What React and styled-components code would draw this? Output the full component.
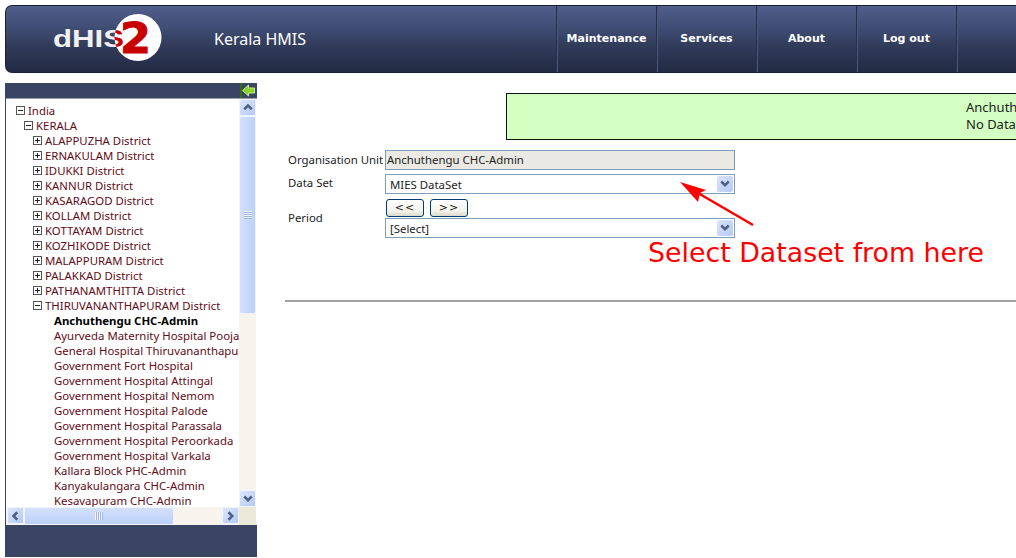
import React from 'react'
import styled, { createGlobalStyle } from 'styled-components'

const GlobalStyle = createGlobalStyle`
  html, body { margin: 0; padding: 0; background: #fff; }
  body { font-family: "Noto Sans", "DejaVu Sans", sans-serif; font-size: 11.4px; }
`

const Page = styled.div`
  position: relative;
  width: 1016px;
  height: 558px;
  overflow: hidden;
  background: #fff;
`

const Header = styled.header`
  display: flex;
  align-items: stretch;
  box-sizing: border-box;
  height: 68px;
  margin: 5px 0 0 5px;
  border: 1px solid #1b2135;
  border-right: none;
  border-radius: 7px 0 0 7px;
  background: linear-gradient(#4f5e8b 0%, #3f4c72 35%, #323d5c 58%, #222a43 100%);
`

const LogoBox = styled.div`
  width: 208px;
  flex: none;
  padding: 7px 0 0 46px;
  box-sizing: border-box;
`

const Title = styled.div`
  flex: 1;
  align-self: center;
  margin-bottom: 1px;
  color: #fff;
  font-size: 16px;
`

const NavItem = styled.div`
  display: flex;
  align-items: center;
  justify-content: center;
  box-sizing: border-box;
  width: ${p => p.$w || 100}px;
  flex: none;
  border-left: 1px solid #28314c;
  box-shadow: inset 1px 0 0 #4a5678;
  color: #fff;
  font-family: "DejaVu Sans", sans-serif;
  font-size: 11px;
  font-weight: 600;
  padding-bottom: 1px;
`

const Content = styled.div`
  display: flex;
  align-items: flex-start;
  margin: 10px 0 0 5px;
`

const Sidebar = styled.aside`
  display: flex;
  flex-direction: column;
  flex: none;
  box-sizing: border-box;
  width: 252px;
  height: 474px;
  background: #3a4563;
`

const SideTop = styled.div`
  display: flex;
  justify-content: flex-end;
  height: 15px;
`

const CollapseBtn = styled.div`
  width: 15px;
  height: 15px;
  border-left: 2px solid #3d6b12;
`

const TreePanel = styled.div`
  display: grid;
  grid-template-columns: 233px 17px;
  grid-template-rows: 408px 18px;
  box-sizing: border-box;
  width: 251px;
  height: 427px;
  margin-left: 1px;
  border-top: 1px solid #9a9fae;
  background: #fff;
`

const Tree = styled.div`
  padding-top: 4px;
  box-sizing: border-box;
  overflow: hidden;
  white-space: nowrap;
`

const Row = styled.div`
  display: flex;
  align-items: center;
  height: 15px;
  padding-left: ${p => p.$indent}px;
  color: ${p => (p.$selected ? '#000' : '#640a14')};
  font-weight: ${p => (p.$selected ? 700 : 400)};
  line-height: 15px;
`

const Toggle = styled.span`
  position: relative;
  flex: none;
  box-sizing: border-box;
  width: 9px;
  height: 9px;
  margin-right: 3px;
  border: 1px solid #555;
  background: #fff;
  &::before {
    content: '';
    position: absolute;
    left: 1px;
    top: 3px;
    width: 5px;
    height: 1px;
    background: #222;
  }
  &::after {
    content: '';
    display: ${p => (p.$open ? 'none' : 'block')};
    position: absolute;
    left: 3px;
    top: 1px;
    width: 1px;
    height: 5px;
    background: #222;
  }
`

const VBar = styled.div`
  display: flex;
  flex-direction: column;
  background: #f6f4ec;
`

const HBar = styled.div`
  display: flex;
  align-items: stretch;
  padding-left: 1px;
  background: #f6f4ec;
`

const ScrollBtn = styled.div`
  display: flex;
  align-items: center;
  justify-content: center;
  flex: none;
  box-sizing: border-box;
  width: ${p => p.$w || 17}px;
  height: ${p => p.$h || 17}px;
  border: 1px solid #eef3fd;
  border-radius: 2px;
  background: linear-gradient(135deg, #dde7fb, #b4c8f2);
`

const Thumb = styled.div`
  display: flex;
  align-items: center;
  justify-content: center;
  flex: none;
  box-sizing: border-box;
  border: 1px solid #eef3fd;
  border-radius: 2px;
  background: linear-gradient(${p => (p.$vertical ? '90deg' : '180deg')}, #d3e0fb, #bcd0f7);
  ${p => (p.$vertical ? 'height: 198px;' : 'width: 150px;')}
`

const Spacer = styled.div`
  flex: 1;
`

const Corner = styled.div`
  background: #ece9d8;
`

const Main = styled.main`
  flex: 1;
  min-width: 0;
  padding-left: 28px;
`

const Message = styled.div`
  box-sizing: border-box;
  width: 600px;
  height: 47px;
  margin: 10px 0 0 221px;
  padding: 5px 0 0 459px;
  border: 1px solid #111;
  border-right: none;
  background: #d3ffc2;
  color: #222;
  font-size: 13px;
  line-height: 17px;
  white-space: nowrap;
`

const Form = styled.div`
  display: grid;
  grid-template-columns: 97px 350px;
  align-items: center;
  row-gap: 4px;
  margin: 10px 0 0 3px;
  color: #222;
`

const Label = styled.label`
  padding-bottom: ${p => p.$pb || 2}px;
  white-space: nowrap;
`

const ReadOnly = styled.div`
  box-sizing: border-box;
  height: 20px;
  padding-left: 1px;
  border: 1px solid #7f9db9;
  background: #ebe9e3;
  line-height: 17px;
`

const SelectBox = styled.div`
  display: flex;
  align-items: center;
  justify-content: space-between;
  box-sizing: border-box;
  height: 20px;
  padding: 0 1px 0 4px;
  border: 1px solid #7f9db9;
  background: #fff;
`

const SelectArrow = styled.span`
  display: flex;
  align-items: center;
  justify-content: center;
  width: 16px;
  height: 16px;
  border-radius: 2px;
  background: linear-gradient(135deg, #dbe5fb, #b5c9f2);
`

const PeriodStack = styled.div`
  display: flex;
  flex-direction: column;
  gap: 1px;
  margin-top: 1px;
`

const ButtonRow = styled.div`
  display: flex;
  gap: 6px;
  padding-left: 1px;
`

const PeriodBtn = styled.button`
  box-sizing: border-box;
  width: 38px;
  height: 18px;
  padding: 0;
  border: 1px solid #003c74;
  border-radius: 3px;
  background: linear-gradient(#fff, #f3f2ea 70%, #dcd8ca);
  color: #222;
  font-family: "DejaVu Sans", sans-serif;
  font-size: 11px;
  letter-spacing: 1px;
  line-height: 14px;
`

const Rule = styled.hr`
  height: 2px;
  margin: 62px 0 0 0;
  border: none;
  background: #a0a0a0;
`

const Pointer = styled.svg`
  position: absolute;
  left: 670px;
  top: 175px;
`

const Callout = styled.div`
  position: absolute;
  left: 648px;
  top: 236px;
  color: #f00;
  font-family: "DejaVu Sans", sans-serif;
  font-size: 26.8px;
  line-height: 34px;
  white-space: nowrap;
`

const Chevron = ({ dir = 'down' }) => {
  const points = {
    down: '1,2 4,5 7,2',
    up: '1,5 4,2 7,5',
    left: '5,1 2,4 5,7',
    right: '2,1 5,4 2,7'
  }
  return (
    <svg width="10" height="10" viewBox="0 0 8 8">
      <polyline points={points[dir]} fill="none" stroke="#4d6185" strokeWidth="2" />
    </svg>
  )
}

const Grip = ({ vertical }) => (
  <svg width="8" height="8" viewBox="0 0 8 8">
    {[0, 2, 4, 6].map(n =>
      vertical
        ? <g key={n}><rect x="0" y={n} width="8" height="1" fill="#f2f6fe" /><rect x="0" y={n + 1} width="8" height="1" fill="#9db4e4" /></g>
        : <g key={n}><rect x={n} y="0" width="1" height="8" fill="#f2f6fe" /><rect x={n + 1} y="0" width="1" height="8" fill="#9db4e4" /></g>
    )}
  </svg>
)

const Logo = () => (
  <svg width="112" height="50" viewBox="0 0 112 50">
    <defs>
      <clipPath id="logoDisc">
        <circle cx="86" cy="24.5" r="23.5" />
      </clipPath>
    </defs>
    <text x="1" y="34" fill="#f1f1f1" fontFamily="Liberation Sans" fontWeight="700" fontSize="24" textLength="71" lengthAdjust="spacingAndGlyphs">dHIS</text>
    <circle cx="86" cy="24.5" r="23.5" fill="#fff" />
    <g clipPath="url(#logoDisc)">
      <text x="1" y="34" fill="#c80000" fontFamily="Liberation Sans" fontWeight="700" fontSize="24" textLength="71" lengthAdjust="spacingAndGlyphs">dHIS</text>
    </g>
    <text x="68" y="40" fill="#c80000" stroke="#c80000" strokeWidth="1" fontFamily="DejaVu Sans" fontWeight="700" fontSize="43" textLength="31" lengthAdjust="spacingAndGlyphs">2</text>
  </svg>
)

const districtsBefore = [
  'ALAPPUZHA District', 'ERNAKULAM District', 'IDUKKI District', 'KANNUR District',
  'KASARAGOD District', 'KOLLAM District', 'KOTTAYAM District', 'KOZHIKODE District',
  'MALAPPURAM District', 'PALAKKAD District', 'PATHANAMTHITTA District'
]

const facilities = [
  'Ayurveda Maternity Hospital Poojappura', 'General Hospital Thiruvananthapuram',
  'Government Fort Hospital', 'Government Hospital Attingal', 'Government Hospital Nemom',
  'Government Hospital Palode', 'Government Hospital Parassala', 'Government Hospital Peroorkada',
  'Government Hospital Varkala', 'Kallara Block PHC-Admin', 'Kanyakulangara CHC-Admin',
  'Kesavapuram CHC-Admin'
]

const menu = ['Maintenance', 'Services', 'About', 'Log out']

const App = () => {
  return (
    <Page>
      <GlobalStyle />
      <Header>
        <LogoBox><Logo /></LogoBox>
        <Title>Kerala HMIS</Title>
        {menu.map(item => <NavItem key={item}>{item}</NavItem>)}
        <NavItem $w={60} />
      </Header>
      <Content>
        <Sidebar>
          <SideTop>
            <CollapseBtn>
              <svg width="13" height="15" viewBox="0 0 13 15">
                <polygon points="0.5,7.5 6.5,2 6.5,5 12.5,5 12.5,10 6.5,10 6.5,13" fill="#86d12a" stroke="#c3f08c" strokeWidth="1" />
              </svg>
            </CollapseBtn>
          </SideTop>
          <TreePanel>
            <Tree>
              <Row $indent={10}><Toggle $open />India</Row>
              <Row $indent={18}><Toggle $open />KERALA</Row>
              {districtsBefore.map(name => (
                <Row key={name} $indent={27}><Toggle />{name}</Row>
              ))}
              <Row $indent={27}><Toggle $open />THIRUVANANTHAPURAM District</Row>
              <Row $indent={48} $selected>Anchuthengu CHC-Admin</Row>
              {facilities.map(name => <Row key={name} $indent={48}>{name}</Row>)}
            </Tree>
            <VBar>
              <ScrollBtn><Chevron dir="up" /></ScrollBtn>
              <Thumb $vertical><Grip vertical /></Thumb>
              <Spacer />
              <ScrollBtn><Chevron dir="down" /></ScrollBtn>
            </VBar>
            <HBar>
              <ScrollBtn><Chevron dir="left" /></ScrollBtn>
              <Thumb><Grip /></Thumb>
              <Spacer />
              <ScrollBtn><Chevron dir="right" /></ScrollBtn>
            </HBar>
            <Corner />
          </TreePanel>
        </Sidebar>
        <Main>
          <Message>
            <div>Anchuthengu CHC-Admin</div>
            <div>No Data Available</div>
          </Message>
          <Form>
            <Label>Organisation Unit</Label>
            <ReadOnly>Anchuthengu CHC-Admin</ReadOnly>
            <Label $pb={3}>Data Set</Label>
            <SelectBox>MIES DataSet<SelectArrow><Chevron /></SelectArrow></SelectBox>
            <Label>Period</Label>
            <PeriodStack>
              <ButtonRow>
                <PeriodBtn>&lt;&lt;</PeriodBtn>
                <PeriodBtn>&gt;&gt;</PeriodBtn>
              </ButtonRow>
              <SelectBox>[Select]<SelectArrow><Chevron /></SelectArrow></SelectBox>
            </PeriodStack>
          </Form>
          <Rule />
        </Main>
      </Content>
      <Pointer width="90" height="56" viewBox="670 175 90 56">
        <line x1="753" y1="225" x2="698" y2="193" stroke="#f00" strokeWidth="2.5" />
        <polygon points="680,182 706,190 700,193 698,202" fill="#f00" />
      </Pointer>
      <Callout>Select Dataset from here</Callout>
    </Page>
  )
}

export default App
